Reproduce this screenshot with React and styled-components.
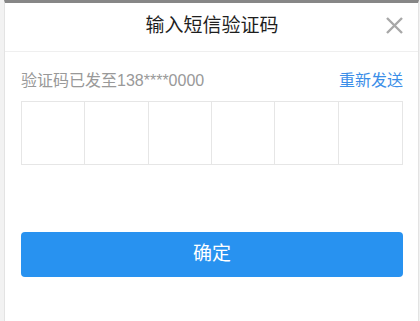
import React, { useState } from 'react';
import styled, { createGlobalStyle } from 'styled-components';

const GlobalStyle = createGlobalStyle`
    html, body {
        margin: 0;
        padding: 0;
        height: 100%;
        background: #f2f2f2;
    }
    #root {
        height: 100%;
    }
    * {
        box-sizing: border-box;
    }
`;

const CODE_LENGTH = 6;

const CloseIcon = () => (
    <svg width="17" height="17" viewBox="0 0 17 17">
        <path d="M1 1 L16 16 M16 1 L1 16" stroke="#a8a8a8" strokeWidth="2.4" fill="none" />
    </svg>
);

const App = () => {
    const [code] = useState(Array(CODE_LENGTH).fill(''));

    return (
        <>
            <GlobalStyle />
            <Panel>
                <Header>
                    <span />
                    <Title>输入短信验证码</Title>
                    <CloseButton aria-label="关闭">
                        <CloseIcon />
                    </CloseButton>
                </Header>
                <Body>
                    <InfoRow>
                        <Hint>验证码已发至138****0000</Hint>
                        <Resend>重新发送</Resend>
                    </InfoRow>
                    <CodeBoxes>
                        {code.map((digit, i) => (
                            <Cell key={i} last={i === CODE_LENGTH - 1}>
                                {digit}
                            </Cell>
                        ))}
                    </CodeBoxes>
                    <Submit>确定</Submit>
                </Body>
            </Panel>
        </>
    );
};

export default App;

const Panel = styled.div`
    margin: 0 1px 0 4px;
    min-height: 100%;
    background: #ffffff;
    border-top: 3px solid #878787;
    border-left: 1px solid #e3e3e3;
    border-right: 1px solid #e3e3e3;
    font-family: 'Liberation Sans', 'Noto Sans CJK SC', sans-serif;
`;

const Header = styled.div`
    display: grid;
    grid-template-columns: 1fr auto 1fr;
    align-items: center;
    height: 49px;
    padding: 0 15px 4px 16px;
    border-bottom: 1px solid #efefef;
`;

const Title = styled.h1`
    margin: 0;
    font-size: 19px;
    font-weight: 400;
    color: #1e1e1e;
    line-height: 1;
`;

const CloseButton = styled.button`
    justify-self: end;
    display: flex;
    padding: 0;
    border: none;
    background: none;
    cursor: pointer;
`;

const Body = styled.div`
    padding: 17px 15px 0 16px;
`;

const InfoRow = styled.div`
    display: flex;
    justify-content: space-between;
    align-items: center;
    height: 24px;
    font-size: 16px;
    line-height: 24px;
`;

const Hint = styled.span`
    color: #999999;
`;

const Resend = styled.a`
    color: #3b8ee8;
    cursor: pointer;
`;

const CodeBoxes = styled.div`
    display: grid;
    grid-template-columns: repeat(6, 1fr);
    height: 64px;
    margin-top: 8px;
    border: 1px solid #e6e6e6;
`;

const Cell = styled.div`
    border-right: ${({ last }) => (last ? 'none' : '1px solid #e6e6e6')};
`;

const Submit = styled.button`
    display: block;
    width: 100%;
    height: 45px;
    margin-top: 67px;
    padding: 0 0 3px;
    border: none;
    border-radius: 4px;
    background: #2892f0;
    color: #ffffff;
    font-family: inherit;
    font-size: 19px;
    line-height: 1;
    cursor: pointer;
`;
